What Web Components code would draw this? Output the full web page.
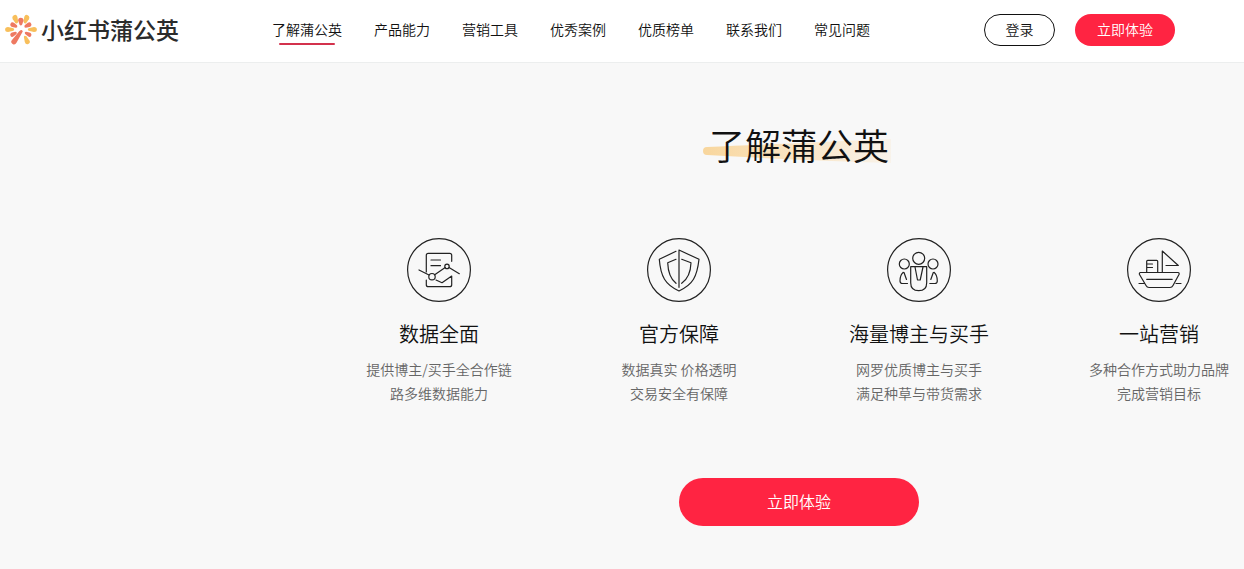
<!DOCTYPE html>
<html lang="zh-CN">
<head>
<meta charset="utf-8">
<title>小红书蒲公英</title>
<style>
html { background: #f8f8f8; }
body { margin: 0; overflow-x: hidden; font-family: "Noto Sans CJK SC", "Liberation Sans", sans-serif; font-weight: 350; color: #111; }
</style>
</head>
<body>
<site-header></site-header>
<about-section heading="了解蒲公英">
  <feature-card icon="chart" heading="数据全面">提供博主/买手全合作链<br>路多维数据能力</feature-card>
  <feature-card icon="shield" heading="官方保障">数据真实 价格透明<br>交易安全有保障</feature-card>
  <feature-card icon="people" heading="海量博主与买手">网罗优质博主与买手<br>满足种草与带货需求</feature-card>
  <feature-card icon="ship" heading="一站营销">多种合作方式助力品牌<br>完成营销目标</feature-card>
</about-section>
<script>
class BaseElement extends HTMLElement {
  connectedCallback() {
    if (!this.shadowRoot) this.attachShadow({ mode: 'open' }).innerHTML = this.render();
  }
}

customElements.define('brand-logo', class extends BaseElement {
  render() {
    return `<style>
      :host { display: block; }
      a { display: flex; align-items: center; gap: 4px; color: #2b2b2b; text-decoration: none; font-size: 23px; font-weight: 500; line-height: 32px; white-space: nowrap; }
      svg { display: block; }
      span { padding-bottom: 3px; }
    </style>
    <a href="#"><svg width="32" height="32" viewBox="0 0 32 32" fill="none" aria-hidden="true">
      <g fill="#f8bf5b">
        <path d="M8.500 14.300 3 13Q.1 13 .1 15.500T3 18L8.500 16.800Q10 15.500 8.500 14.300Z"/>
        <path d="M23.500 14.300 29 13Q31.900 13 31.900 15.500T29 18L23.500 16.800Q22 15.500 23.500 14.300Z"/>
        <path d="M10.500 9.200 7.800 5.300Q6.500 2.700 8.900 1.300T12.400 2.700L13.200 7.500Q12.800 10 10.500 9.200Z"/>
        <path d="M21.100 9.200 23.900 5.300Q25.200 2.700 22.800 1.300T19.300 2.700L18.500 7.500Q18.900 10 21.100 9.200Z"/>
        <path d="M18.900 23 19.800 28Q20.800 31 23.300 29.900T24.400 26.500L21.500 22.300Q19.100 20.800 18.900 23Z"/>
      </g>
      <g fill="#ee7961">
        <path d="M14.600 10.800 13.200 6.500Q13 3.800 15.800 3.800T18.500 6.500L17.100 10.800Q15.800 12.200 14.600 10.800Z"/>
        <path d="M10.900 13.800 7.200 13Q4.500 11.800 5.500 9.700T8.900 8.700L12 11.300Q12.900 13.800 10.900 13.800Z"/>
        <path d="M20.800 13.800 24.500 13Q27.200 11.800 26.200 9.700T22.800 8.700L19.700 11.300Q18.800 13.800 20.800 13.800Z"/>
        <path d="M10.400 17.700 7 18.400Q4.500 19.500 5.500 21.700T8.700 22.300L11.500 19.900Q12.300 17.700 10.400 17.700Z"/>
        <path d="M21.100 17.700 24.500 18.400Q27.200 19.500 26.200 21.700T23 22.300L20.100 19.900Q19.200 17.700 21.100 17.700Z"/>
        <path d="M14 17.400Q15.600 15.200 17.100 16.200T16.900 19L11.500 28.800Q10 31.300 7.600 29.900T6.800 26.300Z"/>
      </g></svg><span>小红书蒲公英</span></a>`;
  }
});

customElements.define('pill-button', class extends BaseElement {
  render() {
    return `<style>
      :host { display: block; width: 100px; height: 32px; font-size: 14px; }
      :host([kind="outline"]) { width: 71px; }
      :host([size="large"]) { width: 240px; height: 48px; font-size: 16px; }
      button { display: block; box-sizing: border-box; width: 100%; height: 100%; padding: 0 0 2px; border: 0; border-radius: 24px; background: #ff2442; color: #fff; font: inherit; cursor: pointer; }
      :host([kind="outline"]) button { border: 1px solid #111; background: #fff; color: #111; }
    </style><button type="button"><slot></slot></button>`;
  }
});

customElements.define('nav-link', class extends BaseElement {
  render() {
    return `<style>
      :host { display: block; }
      a { display: block; position: relative; padding-bottom: 2px; color: #111; text-decoration: none; font-size: 14px; line-height: 30px; white-space: nowrap; }
      :host([active]) a::after { content: ""; position: absolute; left: 10%; right: 10%; bottom: 1px; height: 2px; border-radius: 1px; background: #d3314c; }
    </style><a href="#"><slot></slot></a>`;
  }
});

customElements.define('site-header', class extends BaseElement {
  render() {
    return `<style>
      :host { display: flex; align-items: center; box-sizing: border-box; height: 63px; padding: 0 69px 2px 5px; border-bottom: 1px solid #eceeee; background: #fff; }
      brand-logo { flex: 0 0 267px; }
      nav { display: flex; gap: 32px; }
      .actions { display: flex; gap: 20px; margin-left: auto; }
    </style>
    <brand-logo></brand-logo>
    <nav aria-label="主导航">
      <nav-link active>了解蒲公英</nav-link><nav-link>产品能力</nav-link><nav-link>营销工具</nav-link><nav-link>优秀案例</nav-link><nav-link>优质榜单</nav-link><nav-link>联系我们</nav-link><nav-link>常见问题</nav-link>
    </nav>
    <div class="actions"><pill-button kind="outline">登录</pill-button><pill-button>立即体验</pill-button></div>`;
  }
});

const ICONS = {
  chart: '<path d="M19.300 34V17.300q0-2 2-2h21.400q2 0 2 2v6M19.300 42v4.700q0 2 2 2h21.400q2 0 2-2V38L35 44.700 29 42M24 22h9.500M24 27.700h9.500M12 32l10 5M27.700 36.800l10.500-7.200M42 29.500l10.300 6.200"/><circle cx="25" cy="38.700" r="3.200"/><circle cx="40" cy="28.400" r="2.200"/>',
  shield: '<path d="M29 13.300 12.300 21.300q1 13 5.200 20T32 53q10.500-5 14.500-11.700T52 21.300L32 12v37.300M29 21.300l-8.300 3.400q.5 14.300 8.300 20.600M34.700 21.300 44 24.700q-.5 14.300-9.300 20.600"/>',
  people: '<circle cx="31.700" cy="20.300" r="6"/><circle cx="17.300" cy="26" r="5"/><circle cx="46" cy="26" r="5"/><path d="M23.700 28.700h16v16q0 8-8 8t-8-8ZM28 29l2.500 13h2.700L36 29M16.300 34.300q-3.300 2.700-3.300 8.700 0 2.500 2.500 2.500h5M17 34.500l2.500 7M47 34.300q3.300 2.700 3.300 8.700 0 2.500-2.500 2.500h-5M46.300 34.500l-2.500 7"/>',
  ship: '<path d="M13.500 34.500h37.500q1.500 0 1 2l-6 11q-1 2-3 2H22q-2 0-3-2l-6.500-11q-.5-2 1-2ZM19.700 34.300v-11q0-1 1-1h9q1 0 1 1v11M20.500 26h5M20.500 29.500h5M35.300 34V13l16 14.500H39M19.700 41.300h25.500M12 45.500h5M49 45.500h5"/>'
};

customElements.define('feature-card', class extends BaseElement {
  render() {
    return `<style>
      :host { display: block; text-align: center; }
      svg { display: block; margin: 0 auto 16px; }
      h3 { margin: 0 0 7px; font-size: 20px; font-weight: inherit; line-height: 32px; color: #111; }
      p { margin: 0; font-size: 14px; line-height: 24px; color: #666; white-space: nowrap; }
    </style>
    <svg width="64" height="64" viewBox="0 0 64 64" fill="none" stroke="#222" stroke-width="1.200" stroke-linecap="round" stroke-linejoin="round" aria-hidden="true"><circle cx="32" cy="32" r="31.400"/>${ICONS[this.getAttribute('icon')]}</svg>
    <h3>${this.getAttribute('heading')}</h3><p><slot></slot></p>`;
  }
});

customElements.define('about-section', class extends BaseElement {
  render() {
    return `<style>
      :host { display: block; padding: 54px 0 43px 319px; }
      .inner { width: 960px; display: flex; flex-direction: column; align-items: center; }
      h2 { position: relative; margin: 0 0 67px; font-size: 36px; font-weight: inherit; line-height: 54px; color: #111; }
      h2 span { position: relative; }
      h2 svg { position: absolute; left: -6px; bottom: 8px; }
      .cards { display: grid; grid-template-columns: repeat(4, 240px); margin-bottom: 73px; }
    </style>
    <div class="inner">
      <h2><svg width="188" height="24" viewBox="0 0 188 24" aria-hidden="true"><defs><linearGradient id="g"><stop stop-color="#f8d69d"/><stop offset=".5" stop-color="#fae5c4"/><stop offset="1" stop-color="#f8f3eb"/></linearGradient></defs><path d="M4 8Q75 5 188 0v24Q90 21 4 16Q0 16 0 12T4 8Z" fill="url(#g)"/></svg><span>${this.getAttribute('heading')}</span></h2>
      <div class="cards"><slot></slot></div>
      <pill-button size="large">立即体验</pill-button>
    </div>`;
  }
});
</script>
</body>
</html>
